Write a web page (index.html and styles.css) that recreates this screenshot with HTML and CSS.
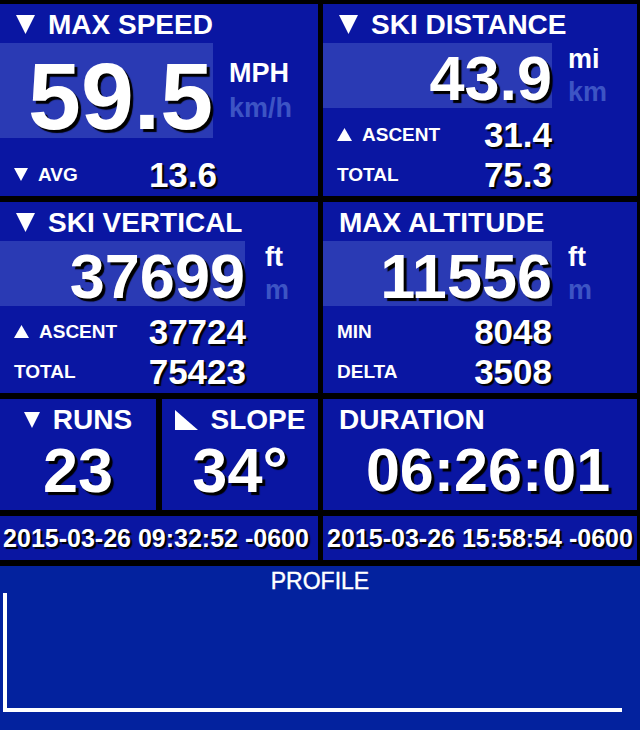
FILE: index.html
```html
<!DOCTYPE html>
<html lang="en">
<head>
    <meta charset="UTF-8">
    <meta name="viewport" content="width=device-width, initial-scale=1.0">
    <title>Ski Stats</title>
    <link rel="stylesheet" href="styles.css">
</head>
<body>
    <div class="board">
        <!-- max speed -->
        <div class="tile">
            <div class="tile-title">
                <svg class="tri" width="19" height="19" viewBox="0 0 19 19"><polygon points="0,0 19,0 9.5,19" fill="#fff"/></svg>
                <span>MAX SPEED</span>
            </div>
            <div class="tile-main">
                <div class="band band-lg" style="width: 213px;">59.5</div>
                <div class="units units-lg">
                    <div>MPH</div>
                    <div class="alt">km/h</div>
                </div>
            </div>
            <div class="rows" style="width: 217px;">
                <div class="stat-row">
                    <span class="label"><svg class="tri-sm" width="14" height="13" viewBox="0 0 14 13"><polygon points="0,0 14,0 7,13" fill="#fff"/></svg>AVG</span>
                    <span class="value">13.6</span>
                </div>
            </div>
        </div>

        <!-- ski distance -->
        <div class="tile">
            <div class="tile-title">
                <svg class="tri" width="19" height="19" viewBox="0 0 19 19"><polygon points="0,0 19,0 9.5,19" fill="#fff"/></svg>
                <span>SKI DISTANCE</span>
            </div>
            <div class="tile-main">
                <div class="band" style="width: 229px;">43.9</div>
                <div class="units">
                    <div>mi</div>
                    <div class="alt">km</div>
                </div>
            </div>
            <div class="rows" style="width: 229px;">
                <div class="stat-row">
                    <span class="label"><svg class="tri-sm" width="15" height="13" viewBox="0 0 15 13"><polygon points="0,13 15,13 7.5,0" fill="#fff"/></svg>ASCENT</span>
                    <span class="value">31.4</span>
                </div>
                <div class="stat-row">
                    <span class="label">TOTAL</span>
                    <span class="value">75.3</span>
                </div>
            </div>
        </div>

        <!-- ski vertical -->
        <div class="tile">
            <div class="tile-title">
                <svg class="tri" width="19" height="19" viewBox="0 0 19 19"><polygon points="0,0 19,0 9.5,19" fill="#fff"/></svg>
                <span>SKI VERTICAL</span>
            </div>
            <div class="tile-main">
                <div class="band" style="width: 245px;">37699</div>
                <div class="units units-wide">
                    <div>ft</div>
                    <div class="alt">m</div>
                </div>
            </div>
            <div class="rows" style="width: 246px;">
                <div class="stat-row">
                    <span class="label"><svg class="tri-sm" width="15" height="13" viewBox="0 0 15 13"><polygon points="0,13 15,13 7.5,0" fill="#fff"/></svg>ASCENT</span>
                    <span class="value">37724</span>
                </div>
                <div class="stat-row">
                    <span class="label">TOTAL</span>
                    <span class="value">75423</span>
                </div>
            </div>
        </div>

        <!-- max altitude -->
        <div class="tile">
            <div class="tile-title">
                <span>MAX ALTITUDE</span>
            </div>
            <div class="tile-main">
                <div class="band" style="width: 229px;">11556</div>
                <div class="units">
                    <div>ft</div>
                    <div class="alt">m</div>
                </div>
            </div>
            <div class="rows" style="width: 229px;">
                <div class="stat-row">
                    <span class="label">MIN</span>
                    <span class="value">8048</span>
                </div>
                <div class="stat-row">
                    <span class="label">DELTA</span>
                    <span class="value">3508</span>
                </div>
            </div>
        </div>

        <!-- runs / slope -->
        <div class="pair">
            <div class="tile">
                <div class="tile-title center">
                    <svg class="tri" width="16" height="16" viewBox="0 0 16 16"><polygon points="0,0 16,0 8,16" fill="#fff"/></svg>
                    <span>RUNS</span>
                </div>
                <div class="big-value">23</div>
            </div>
            <div class="tile">
                <div class="tile-title center">
                    <svg class="tri" width="23" height="20" viewBox="0 0 23 20"><polygon points="0,0 0,20 23,20" fill="#fff"/></svg>
                    <span>SLOPE</span>
                </div>
                <div class="big-value">34°</div>
            </div>
        </div>

        <!-- duration -->
        <div class="tile">
            <div class="tile-title">
                <span>DURATION</span>
            </div>
            <div class="big-value duration">06:26:01</div>
        </div>

        <div class="tile date date-left">2015-03-26 09:32:52 -0600</div>
        <div class="tile date">2015-03-26 15:58:54 -0600</div>

        <div class="profile">
            <div class="profile-title">PROFILE</div>
            <div class="chart"></div>
        </div>
    </div>
</body>
</html>
```

FILE: styles.css
```css
body {
    margin: 0;
    background-color: #000;
    color: #fff;
    font-family: 'Liberation Sans', Arial, sans-serif;
    font-weight: bold;
}

.board {
    display: grid;
    grid-template-columns: 318px 314px;
    grid-template-rows: 192px 191px 111px 44px 164px;
    column-gap: 5px;
    row-gap: 6px;
    width: 640px;
    height: 730px;
    padding: 4px 3px 0 0;
    box-sizing: border-box;
    overflow: hidden;
}

.tile {
    background-color: #0a16a2;
    display: flex;
    flex-direction: column;
}

.tile-title {
    display: flex;
    align-items: center;
    gap: 13px;
    height: 37px;
    padding: 2px 0 0 16px;
    font-size: 28px;
    line-height: 37px;
}

.tile-title.center {
    justify-content: center;
    padding-left: 0;
}

.tile-main {
    display: flex;
    align-items: flex-start;
}

.band {
    height: 65px;
    background-color: #2a3ab4;
    text-align: right;
    font-size: 63px;
    line-height: 70px;
    text-shadow: 3px 3px 1px #000;
}

.band-lg {
    height: 95px;
    font-size: 95px;
    line-height: 106px;
}

.units {
    padding-left: 16px;
    font-size: 27px;
    line-height: 33px;
}

.units-wide {
    padding-left: 20px;
}

.units-lg {
    padding-top: 13px;
    line-height: 35px;
}

.units .alt {
    color: #3d54c4;
}

.rows {
    margin-top: auto;
    padding-bottom: 1px;
}

.stat-row {
    display: flex;
    justify-content: space-between;
    align-items: center;
    height: 40px;
    padding-left: 14px;
}

.label {
    font-size: 19px;
    line-height: 20px;
}

.tri-sm {
    margin-right: 10px;
}

.value {
    font-size: 35px;
    line-height: 40px;
    text-shadow: 2px 2px 1px #000;
}

.pair {
    display: grid;
    grid-template-columns: 156px 156px;
    column-gap: 6px;
}

.big-value {
    text-align: center;
    font-size: 63px;
    line-height: 64px;
    text-shadow: 3px 3px 1px #000;
}

.duration {
    font-size: 61px;
    padding-left: 16px;
}

.date {
    display: block;
    text-align: center;
    font-size: 25px;
    line-height: 44px;
    white-space: nowrap;
    text-shadow: 2px 2px 1px #000;
}

.date-left {
    padding-right: 6px;
}

.profile {
    grid-column: 1 / -1;
    margin-right: -3px;
    background-color: #03229e;
}

.profile-title {
    text-align: center;
    font-weight: normal;
    font-size: 23px;
    line-height: 24px;
    padding-top: 3px;
    -webkit-text-stroke: 0.4px #fff;
}

.chart {
    width: 619px;
    height: 119px;
    margin-left: 3px;
    border-left: 4px solid #fff;
    border-bottom: 4px solid #fff;
    box-sizing: border-box;
}
```
